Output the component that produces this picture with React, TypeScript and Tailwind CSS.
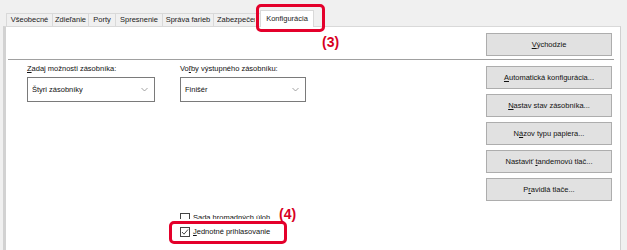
import React from 'react';

const font = { fontFamily: '"Liberation Sans", Arial, sans-serif' };

const tabs = [
  { label: 'Všeobecné', w: 46 },
  { label: 'Zdieľanie', w: 36 },
  { label: 'Porty', w: 27 },
  { label: 'Spresnenie', w: 47 },
  { label: 'Správa farieb', w: 51 },
];

function Acc({ before, key1, after }: { before?: string; key1: string; after: string }) {
  return (
    <span>
      {before}
      <span className="underline underline-offset-[1px]">{key1}</span>
      {after}
    </span>
  );
}

function Btn({ children }: { children: React.ReactNode }) {
  return (
    <div className="w-[126px] h-[23px] bg-[#e1e1e1] border border-[#adadad] flex items-center justify-center text-[7.5px] text-[#111]">
      {children}
    </div>
  );
}

function Select({ value, w }: { value: string; w: string }) {
  return (
    <div className={`${w} h-[25px] mt-[3px] bg-white border border-[#7a7a7a] flex items-center justify-between pl-[4px] pr-[6px] text-[7.5px] text-[#111]`}>
      <span>{value}</span>
      <svg width="7" height="5" viewBox="0 0 7 5">
        <polyline points="0.5,1 3.5,4 6.5,1" fill="none" stroke="#8a8a8a" strokeWidth="0.8" />
      </svg>
    </div>
  );
}

function Check({ checked }: { checked?: boolean }) {
  return (
    <div className="w-[10px] h-[10px] border border-[#444] bg-white flex items-center justify-center shrink-0">
      {checked && (
        <svg width="8" height="8" viewBox="0 0 8 8">
          <polyline points="1,4 3,6.2 7,1.5" fill="none" stroke="#333" strokeWidth="0.9" />
        </svg>
      )}
    </div>
  );
}

export default function App() {
  return (
    <div className="relative w-[627px] h-[250px] bg-[#f0f0f0] overflow-hidden text-black" style={font}>
      {/* tab strip */}
      <div className="flex items-end h-[26px] pl-[6px]">
        {tabs.map((t) => (
          <div
            key={t.label}
            className="h-[13px] border-t border-l border-[#d9d9d9] bg-[#f0f0f0] flex items-center justify-center text-[7.5px] text-[#222]"
            style={{ width: t.w }}
          >
            {t.label}
          </div>
        ))}
        <div className="w-[47px] h-[13px] border-t border-l border-[#d9d9d9] bg-[#f0f0f0] pl-[3px] flex items-center overflow-hidden whitespace-nowrap text-[7.5px] text-[#222]">
          <span className="w-[38px] overflow-hidden">Zabezpečenie</span>
        </div>
        <div className="w-[54px] h-[17px] -mb-[1px] border-t border-l border-r border-[#d9d9d9] bg-white flex items-start justify-center pt-[2px] text-[7.5px] text-[#222] relative z-10">
          Konfigurácia
        </div>
      </div>

      {/* panel */}
      <div className="ml-[3px] w-[618px] h-[224px] bg-white border-t border-t-[#d9d9d9] border-l-[3px] border-l-[#d2d2d2] border-r border-r-[#d0d0d0] flex flex-col">
        <div className="flex justify-end pr-[8px] pt-[6px]">
          <Btn>
            <Acc key1="V" after="ýchodzie" />
          </Btn>
        </div>
        <div className="mt-[3px] ml-[2px] mr-[6px] h-px bg-[#a0a0a0]" />

        <div className="flex justify-between pr-[8px]">
          <div className="pl-[21px] pt-[3px] flex flex-col">
            <div className="flex gap-[25px]">
              <div className="flex flex-col">
                <div className="h-[11px] leading-[11px] text-[7.5px] text-[#111]">
                  <Acc key1="Z" after="adaj možnosti zásobníka:" />
                </div>
                <Select value="Štyri zásobníky" w="w-[128px]" />
              </div>
              <div className="flex flex-col">
                <div className="h-[11px] leading-[11px] text-[7.5px] text-[#111]">
                  <Acc before="Vo" key1="ľ" after="by výstupného zásobníku:" />
                </div>
                <Select value="Finišér" w="w-[126px]" />
              </div>
            </div>

            <div className="ml-[153px] mt-[111px] h-[6px] overflow-hidden flex items-start gap-[3px] text-[7.5px] text-[#111]">
              <Check />
              <span className="leading-[10px]">Sada hromadných úloh</span>
            </div>
            <div className="ml-[153px] mt-[7px] flex items-center gap-[3px] text-[7.5px] text-[#111]">
              <Check checked />
              <span className="leading-[11px]">
                <Acc key1="J" after="ednotné prihlasovanie" />
              </span>
            </div>
          </div>

          <div className="pt-[6px] flex flex-col gap-[5px]">
            <Btn>
              <Acc key1="A" after="utomatická konfigurácia..." />
            </Btn>
            <Btn>
              <Acc key1="N" after="astav stav zásobníka..." />
            </Btn>
            <Btn>
              <Acc before="N" key1="á" after="zov typu papiera..." />
            </Btn>
            <Btn>
              <Acc before="Nastaviť " key1="t" after="andemovú tlač..." />
            </Btn>
            <Btn>
              <Acc before="P" key1="r" after="avidlá tlače..." />
            </Btn>
          </div>
        </div>
      </div>

      {/* annotations */}
      <div className="absolute left-[256px] top-[4px] w-[69px] h-[28px] border-[3px] border-[#e4002b] rounded-[5px]" />
      <div className="absolute left-[322px] top-[34px] text-[14px] font-bold text-[#d8001f] leading-[16px]">(3)</div>
      <div className="absolute left-[169px] top-[221px] w-[118px] h-[23px] border-[3px] border-[#e4002b] rounded-[5px]" />
      <div className="absolute left-[279px] top-[206px] text-[14px] font-bold text-[#d8001f] leading-[16px]">(4)</div>
    </div>
  );
}
